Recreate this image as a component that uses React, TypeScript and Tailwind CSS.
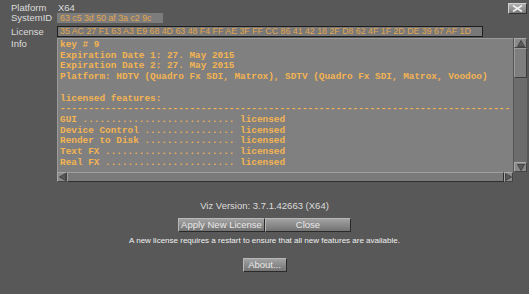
import React from "react";

const mono = { fontFamily: '"Liberation Mono", "DejaVu Sans Mono", monospace' };

const features = [
  "GUI",
  "Device Control",
  "Render to Disk",
  "Text FX",
  "Real FX",
];

const featureLine = (name: string) => {
  const dots = ".".repeat(32 - name.length - 2);
  return `${name} ${dots} licensed`;
};

const Label = ({ children }: { children: React.ReactNode }) => (
  <div className="w-[57px] shrink-0 pl-[11px] text-[#dcdcdc]">{children}</div>
);

const Btn = ({ children, className = "" }: { children: React.ReactNode; className?: string }) => (
  <button
    className={
      "h-[14px] flex items-center justify-center text-[9.5px] text-[#e8e8e8] bg-gradient-to-b from-[#a2a2a2] to-[#737373] border-t border-l border-[#b8b8b8] border-r border-b border-r-[#2a2a2a] border-b-[#2a2a2a] " +
      className
    }
  >
    {children}
  </button>
);

export default function App() {
  return (
    <div
      className="relative w-[529px] h-[294px] bg-[#585858] overflow-hidden text-[9.5px] leading-none"
      style={{ fontFamily: '"Liberation Sans", Arial, sans-serif' }}
    >
      <button className="absolute top-[3px] right-[2px] w-[19px] h-[11px] bg-gradient-to-b from-[#b0b0b0] to-[#7a7a7a] border border-[#d0d0d0] border-r-[#333] border-b-[#333] flex items-center justify-center">
        <svg width="11" height="7" viewBox="0 0 11 7">
          <path d="M1 0.5 L10 6.5 M10 0.5 L1 6.5" stroke="#f2f2f2" strokeWidth="1.6" />
        </svg>
      </button>

      <div className="flex flex-col pt-[3px]">
        <div className="flex items-center h-[10px]">
          <Label>Platform</Label>
          <div className="pl-[1px] text-[#dcdcdc]">X64</div>
        </div>
        <div className="flex items-center h-[10px]">
          <Label>SystemID</Label>
          <div className="h-[10px] w-[106px] bg-[#7c7c7c] text-[#e3a64c] text-[8.8px] whitespace-nowrap flex items-center pl-[3px]">
            63 c5 3d 50 af 3a c2 9c
          </div>
        </div>
        <div className="flex items-center h-[11px] mt-[3px]">
          <Label>License</Label>
          <div className="h-[11px] w-[426px] bg-[#787878] border border-[#1e1e1e] text-[#e3a64c] text-[8.8px] whitespace-nowrap overflow-hidden flex items-center pl-[2px]">
            35 AC 27 F1 63 A3 E9 68 4D 63 48 F4 FF AE 3F FF CC 86 41 42 18 2F D8 62 4F 1F 2D DE 39 67 AF 1D
          </div>
        </div>
        <div className="flex mt-[1px]">
          <Label>
            <div className="mt-[1px]">Info</div>
          </Label>
          <div className="flex flex-col w-[470px]">
            <div className="flex h-[134px]">
              <div className="flex-1 bg-[#808080] border-t border-l border-[#9a9a9a] overflow-hidden pl-[2px] pt-[1px]">
                <pre
                  className="text-[9.4px] leading-[10.7px] font-bold text-[#f4b452] whitespace-pre"
                  style={mono}
                >
                  {[
                    "key # 9",
                    "Expiration Date 1: 27. May 2015",
                    "Expiration Date 2: 27. May 2015",
                    "Platform: HDTV (Quadro Fx SDI, Matrox), SDTV (Quadro Fx SDI, Matrox, Voodoo)",
                    "",
                    "licensed features:",
                    "-".repeat(80),
                    ...features.map(featureLine),
                  ].join("\n")}
                </pre>
              </div>
              <div className="w-[14px] bg-[#6c6c6c] flex flex-col border-l border-[#555]">
                <div className="h-[10px] bg-[#8a8a8a] border border-[#a8a8a8] border-r-[#444] border-b-[#444] flex items-center justify-center">
                  <svg width="8" height="7" viewBox="0 0 8 7">
                    <path d="M4 0.5 L7.5 6.5 L0.5 6.5 Z" fill="#5a5a5a" stroke="#3a3a3a" strokeWidth="0.8" />
                  </svg>
                </div>
                <div className="h-[30px] bg-[#7e7e7e] border border-[#9c9c9c] border-r-[#3c3c3c] border-b-[#3c3c3c]" />
                <div className="flex-1" />
                <div className="h-[10px] bg-[#8a8a8a] border border-[#a8a8a8] border-r-[#444] border-b-[#444] flex items-center justify-center">
                  <svg width="8" height="7" viewBox="0 0 8 7">
                    <path d="M0.5 0.5 L7.5 0.5 L4 6.5 Z" fill="#5a5a5a" stroke="#3a3a3a" strokeWidth="0.8" />
                  </svg>
                </div>
              </div>
            </div>
            <div className="flex h-[10px] w-[456px] bg-[#6c6c6c]">
              <div className="w-[10px] bg-[#8a8a8a] border border-[#a8a8a8] border-r-[#444] border-b-[#444] flex items-center justify-center">
                <svg width="7" height="8" viewBox="0 0 7 8">
                  <path d="M0.5 4 L6.5 0.5 L6.5 7.5 Z" fill="#5a5a5a" stroke="#3a3a3a" strokeWidth="0.8" />
                </svg>
              </div>
              <div className="flex-1 bg-[#7a7a7a] border border-[#a0a0a0] border-r-[#2e2e2e] border-b-[#2e2e2e]" />
              <div className="w-[9px] bg-[#8a8a8a] border border-[#a8a8a8] border-r-[#444] border-b-[#444] flex items-center justify-center">
                <svg width="7" height="8" viewBox="0 0 7 8">
                  <path d="M6.5 4 L0.5 0.5 L0.5 7.5 Z" fill="#5a5a5a" stroke="#3a3a3a" strokeWidth="0.8" />
                </svg>
              </div>
            </div>
          </div>
        </div>
      </div>

      <div className="flex flex-col items-center mt-[19px]">
        <div className="text-[#dcdcdc] h-[10px] flex items-center">Viz Version: 3.7.1.42663 (X64)</div>
        <div className="flex mt-[7px]">
          <Btn className="w-[87px]">Apply New License</Btn>
          <Btn className="w-[86px]">Close</Btn>
        </div>
        <div className="text-[#f0f0f0] text-[8px] mt-[4px] h-[9px] flex items-center">
          A new license requires a restart to ensure that all new features are available.
        </div>
        <Btn className="w-[44px] mt-[13px]">About...</Btn>
      </div>
    </div>
  );
}
